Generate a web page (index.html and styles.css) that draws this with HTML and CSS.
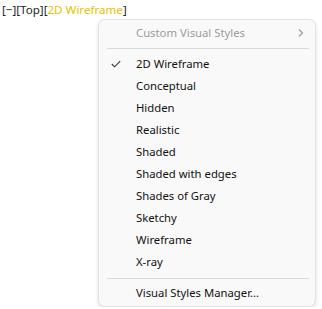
FILE: index.html
```html
<!DOCTYPE html>
<html lang="en">
<head>
    <meta charset="UTF-8">
    <title>Visual Styles</title>
    <link rel="stylesheet" href="styles.css">
</head>
<body>
    <div class="viewport-label">[&minus;][Top][<span class="current">2D Wireframe</span>]</div>

    <div class="menu">
        <div class="menu-item disabled">
            <span class="check"></span>
            <span class="label">Custom Visual Styles</span>
            <span class="arrow">
                <svg width="8" height="10" viewBox="0 0 8 10"><path d="M2 1.5 L5.5 5 L2 8.5" fill="none" stroke="#9a9a9a" stroke-width="1.1"/></svg>
            </span>
        </div>
        <div class="separator"></div>
        <div class="menu-item">
            <span class="check">
                <svg width="10" height="8" viewBox="0 0 10 8"><path d="M0.8 4 L3.6 6.8 L9.2 1.2" fill="none" stroke="#333" stroke-width="1.1"/></svg>
            </span>
            <span class="label">2D Wireframe</span>
        </div>
        <div class="menu-item"><span class="check"></span><span class="label">Conceptual</span></div>
        <div class="menu-item"><span class="check"></span><span class="label">Hidden</span></div>
        <div class="menu-item"><span class="check"></span><span class="label">Realistic</span></div>
        <div class="menu-item"><span class="check"></span><span class="label">Shaded</span></div>
        <div class="menu-item"><span class="check"></span><span class="label">Shaded with edges</span></div>
        <div class="menu-item"><span class="check"></span><span class="label">Shades of Gray</span></div>
        <div class="menu-item"><span class="check"></span><span class="label">Sketchy</span></div>
        <div class="menu-item"><span class="check"></span><span class="label">Wireframe</span></div>
        <div class="menu-item"><span class="check"></span><span class="label">X-ray</span></div>
        <div class="separator"></div>
        <div class="menu-item"><span class="check"></span><span class="label">Visual Styles Manager...</span></div>
    </div>
</body>
</html>
```

FILE: styles.css
```css
body {
    margin: 0;
    background-color: #fff;
    font-family: "Noto Sans", "Open Sans", sans-serif;
    font-size: 11.3px;
    color: #111;
}
.viewport-label {
    height: 19px;
    padding-left: 2px;
    font-size: 11.6px;
    line-height: 20px;
    color: #1e1e1e;
}
.viewport-label .current {
    color: #e6c200;
}
.menu {
    width: 216px;
    margin: 0 0 0 98px;
    padding: 2px 0 1.5px;
    background-color: #f9f9f9;
    border: 1px solid #e3e3e3;
    border-radius: 7px;
    box-shadow: 0 2px 4px rgba(0, 0, 0, 0.12);
}
.menu-item {
    display: flex;
    align-items: center;
    height: 22.1px;
    line-height: 22px;
}
.menu-item .check {
    width: 25px;
    display: flex;
    padding-left: 12px;
}
.menu-item .label {
    flex: 1;
}
.menu-item .arrow {
    width: 18px;
    display: flex;
}
.menu-item.disabled {
    color: #9c9c9c;
}
.separator {
    height: 1px;
    margin: 4px 6px 3.5px 8px;
    background-color: #d9d9d9;
}
```
